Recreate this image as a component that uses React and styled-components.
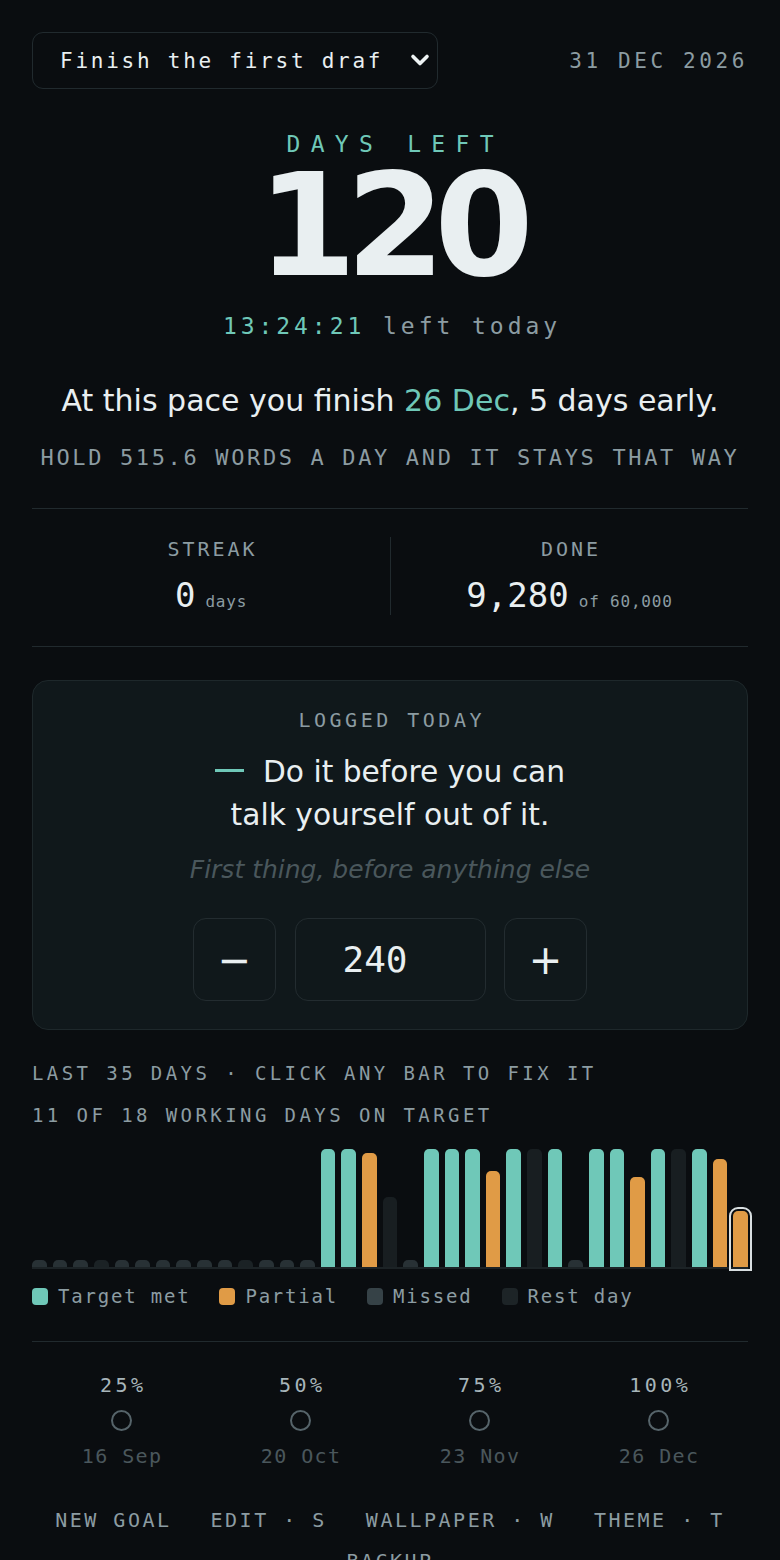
import React from "react";
import styled, { createGlobalStyle } from "styled-components";

const C = {
  bg: "#0a0d10",
  text: "#e9eff1",
  gray: "#8c9ca2",
  teal: "#6fc8b8",
  orange: "#e09b46",
  dim: "#4a575c",
  line: "#212a2e",
  card: "#10181b",
  missed: "#283135",
  rest: "#181e21",
};

const Global = createGlobalStyle`
  html, body { margin: 0; padding: 0; background: ${C.bg}; }
  body { font-family: "DejaVu Sans Mono", monospace; color: ${C.text}; overflow: hidden; }
  * { box-sizing: border-box; }
`;

const Page = styled.main`
  width: 780px;
  padding: 32px 32px 0;
  display: flex;
  flex-direction: column;
  & > * { flex-shrink: 0; }
`;

const Header = styled.header`
  display: flex;
  align-items: center;
  justify-content: space-between;
  height: 57px;
`;

const SelectWrap = styled.div`
  position: relative;
  width: 406px;
  height: 57px;
`;

const Select = styled.select`
  appearance: none;
  width: 100%;
  height: 100%;
  background: transparent;
  border: 1.5px solid ${C.line};
  border-radius: 11px;
  color: ${C.text};
  font-family: "DejaVu Sans Mono", monospace;
  font-size: 21px;
  letter-spacing: 2.75px;
  padding: 0 57px 0 27px;
  outline: none;
`;

const Chevron = styled.svg`
  position: absolute;
  right: 8px;
  top: 21px;
  width: 20px;
  height: 14px;
  pointer-events: none;
`;

const DateText = styled.div`
  font-size: 21px;
  letter-spacing: 3.6px;
  color: ${C.gray};
`;

const Hero = styled.section`
  display: flex;
  flex-direction: column;
  align-items: center;
  margin-top: 44px;
`;

const Eyebrow = styled.div`
  font-size: 23px;
  line-height: 23px;
  letter-spacing: 10.3px;
  margin-right: -10.3px;
  color: ${C.teal};
`;

const BigNum = styled.div`
  font-family: "DejaVu Sans", sans-serif;
  font-weight: 700;
  font-size: 143px;
  line-height: 140px;
  letter-spacing: -11px;
  margin-right: 0;
  color: ${C.text};
`;

const Clock = styled.div`
  margin-top: 16px;
  font-size: 23px;
  line-height: 28px;
  letter-spacing: 3.95px;
  margin-right: -3.95px;
  color: ${C.gray};
  span { color: ${C.teal}; }
`;

const Pace = styled.p`
  margin: 43px 0 0;
  font-family: "DejaVu Sans", sans-serif;
  font-size: 30px;
  line-height: 36px;
  text-align: center;
  color: ${C.text};
  span { color: ${C.teal}; }
`;

const Hold = styled.div`
  margin-top: 25px;
  text-align: center;
  font-size: 22px;
  line-height: 28px;
  letter-spacing: 2.64px;
  color: ${C.gray};
  white-space: nowrap;
`;

const Rule = styled.hr`
  border: none;
  height: 1px;
  background: ${C.line};
  margin: ${(p) => p.$m || "0"};
  width: 100%;
`;

const Stats = styled.section`
  display: grid;
  grid-template-columns: 1fr 1fr;
  padding: 28px 0 31px;
`;

const Stat = styled.div`
  display: flex;
  flex-direction: column;
  align-items: center;
  gap: 14px;
  border-left: ${(p) => (p.$divider ? `1.5px solid ${C.line}` : "none")};
`;

const StatLabel = styled.div`
  font-size: 20px;
  line-height: 24px;
  letter-spacing: 3px;
  margin-right: -3px;
  color: ${C.gray};
`;

const StatValue = styled.div`
  font-size: 34px;
  line-height: 40px;
  color: ${C.text};
  small {
    font-size: 16px;
    line-height: 1;
    letter-spacing: 0.8px;
    color: ${C.gray};
    margin-left: 10px;
  }
`;

const Card = styled.section`
  margin-top: 33px;
  background: ${C.card};
  border: 1.5px solid #1e282b;
  border-radius: 16px;
  padding: 27px 24px 28px;
  display: flex;
  flex-direction: column;
  align-items: center;
`;

const CardLabel = styled(StatLabel)`
  letter-spacing: 3.5px;
  margin-right: -3.5px;
`;

const Quote = styled.p`
  margin: 19px 0 0;
  max-width: 400px;
  text-align: center;
  font-family: "DejaVu Sans", sans-serif;
  font-size: 29.7px;
  line-height: 42.6px;
  color: ${C.text};
`;

const Dash = styled.span`
  display: inline-block;
  width: 29px;
  height: 3px;
  background: ${C.teal};
  margin-right: 19px;
  vertical-align: 10.5px;
`;

const Hint = styled.div`
  margin-top: 19px;
  font-family: "DejaVu Sans", sans-serif;
  font-style: italic;
  font-size: 25px;
  line-height: 30px;
  color: ${C.dim};
`;

const Stepper = styled.div`
  margin-top: 33px;
  display: flex;
  gap: 18.5px;
`;

const StepBtn = styled.button`
  width: 83px;
  height: 83px;
  border-radius: 13px;
  border: 1.5px solid #232c30;
  background: ${C.card};
  color: ${C.text};
  font-family: "DejaVu Sans", sans-serif;
  font-size: 40px;
  line-height: 1;
  display: flex;
  align-items: center;
  justify-content: center;
  padding: 0;
`;

const StepInput = styled.input`
  width: 191px;
  height: 83px;
  border-radius: 13px;
  border: 1.5px solid #232c30;
  background: ${C.card};
  color: ${C.text};
  font-family: "DejaVu Sans Mono", monospace;
  font-size: 36px;
  text-align: center;
  padding: 0 30px 0 0;
  outline: none;
`;

const ChartHead = styled.div`
  margin-top: ${(p) => p.$mt || "0"};
  font-size: 19px;
  line-height: 22px;
  letter-spacing: 3.42px;
  color: ${C.gray};
  white-space: nowrap;
`;

const Chart = styled.div`
  margin-top: 23px;
  height: 120px;
  display: flex;
  align-items: flex-end;
  gap: 6px;
  border-bottom: 2px solid #1c2326;
`;

const barColor = {
  met: C.teal,
  partial: C.orange,
  missed: C.missed,
  rest: C.rest,
  restSmall: "#1b2225",
};

const Bar = styled.div`
  flex: 1;
  background: ${(p) => barColor[p.$type]};
  border-radius: 5px 5px 0 0;
  ${(p) => p.$selected && `outline: 2px solid #d9dfe1; outline-offset: 2px;`}
`;

const Legend = styled.div`
  margin-top: 16px;
  display: flex;
  gap: 29px;
`;

const LegendItem = styled.div`
  display: flex;
  align-items: center;
  gap: 10px;
  font-size: 19px;
  line-height: 22px;
  letter-spacing: 1.8px;
  color: ${C.gray};
`;

const Swatch = styled.span`
  width: 16px;
  height: 17px;
  border-radius: 4px;
  background: ${(p) => p.$c};
`;

const Milestones = styled.section`
  display: grid;
  grid-template-columns: repeat(4, 1fr);
  padding-top: 31px;
`;

const Milestone = styled.div`
  display: flex;
  flex-direction: column;
  align-items: center;
`;

const MsPct = styled.div`
  font-size: 20px;
  line-height: 24px;
  letter-spacing: 3.5px;
  margin-right: -3.5px;
  color: #a7b5ba;
`;

const Ring = styled.span`
  margin-top: 13px;
  width: 21px;
  height: 21px;
  border-radius: 50%;
  border: 2px solid #56646a;
`;

const MsDate = styled.div`
  margin-top: 13px;
  font-size: 20px;
  line-height: 24px;
  letter-spacing: 1.4px;
  margin-right: -1.4px;
  color: ${C.dim};
`;

const Nav = styled.nav`
  margin-top: 40px;
  display: flex;
  flex-wrap: wrap;
  justify-content: center;
  column-gap: 39px;
  row-gap: 17px;
`;

const NavLink = styled.a`
  font-size: 20px;
  line-height: 24px;
  letter-spacing: 2.5px;
  color: ${C.gray};
  text-decoration: none;
  white-space: nowrap;
`;

const bars = [
  ["missed", 7], ["missed", 7], ["missed", 7], ["restSmall", 7], ["missed", 7],
  ["missed", 7], ["missed", 7], ["missed", 7], ["missed", 7], ["missed", 7],
  ["restSmall", 7], ["missed", 7], ["missed", 7], ["missed", 7],
  ["met", 118], ["met", 118], ["partial", 114], ["rest", 70], ["missed", 7],
  ["met", 118], ["met", 118], ["met", 118], ["partial", 96], ["met", 118],
  ["rest", 118], ["met", 118], ["missed", 7], ["met", 118], ["met", 118],
  ["partial", 90], ["met", 118], ["rest", 118], ["met", 118], ["partial", 108],
  ["partial", 56],
];

export default function App() {
  return (
    <>
      <Global />
      <Page>
        <Header>
          <SelectWrap>
            <Select defaultValue="a">
              <option value="a">Finish the first draft</option>
            </Select>
            <Chevron viewBox="0 0 20 14" fill="none">
              <path d="M3 3.5 L10 10.5 L17 3.5" stroke="#eef3f4" strokeWidth="3.6" strokeLinecap="round" strokeLinejoin="round" />
            </Chevron>
          </SelectWrap>
          <DateText>31 DEC 2026</DateText>
        </Header>

        <Hero>
          <Eyebrow>DAYS LEFT</Eyebrow>
          <BigNum>120</BigNum>
          <Clock>
            <span>13:24:21</span> left today
          </Clock>
        </Hero>

        <Pace>
          At this pace you finish <span>26 Dec</span>, 5 days early.
        </Pace>
        <Hold>HOLD 515.6 WORDS A DAY AND IT STAYS THAT WAY</Hold>

        <Rule $m="36px 0 0" />
        <Stats>
          <Stat>
            <StatLabel>STREAK</StatLabel>
            <StatValue>
              0<small>days</small>
            </StatValue>
          </Stat>
          <Stat $divider>
            <StatLabel>DONE</StatLabel>
            <StatValue>
              9,280<small>of 60,000</small>
            </StatValue>
          </Stat>
        </Stats>
        <Rule />

        <Card>
          <CardLabel>LOGGED TODAY</CardLabel>
          <Quote>
            <Dash />
            Do it before you can talk yourself out of it.
          </Quote>
          <Hint>First thing, before anything else</Hint>
          <Stepper>
            <StepBtn aria-label="decrease">−</StepBtn>
            <StepInput defaultValue="240" />
            <StepBtn aria-label="increase">+</StepBtn>
          </Stepper>
        </Card>

        <ChartHead $mt="32px">LAST 35 DAYS · CLICK ANY BAR TO FIX IT</ChartHead>
        <ChartHead $mt="20px">11 OF 18 WORKING DAYS ON TARGET</ChartHead>
        <Chart>
          {bars.map(([t, h], i) => (
            <Bar key={i} $type={t} $selected={i === bars.length - 1} style={{ height: `${h}px` }} />
          ))}
        </Chart>
        <Legend>
          <LegendItem><Swatch $c={C.teal} />Target met</LegendItem>
          <LegendItem><Swatch $c={C.orange} />Partial</LegendItem>
          <LegendItem><Swatch $c="#364247" />Missed</LegendItem>
          <LegendItem><Swatch $c="#1d2427" />Rest day</LegendItem>
        </Legend>

        <Rule $m="34px 0 0" />
        <Milestones>
          {[
            ["25%", "16 Sep"],
            ["50%", "20 Oct"],
            ["75%", "23 Nov"],
            ["100%", "26 Dec"],
          ].map(([p, d]) => (
            <Milestone key={p}>
              <MsPct>{p}</MsPct>
              <Ring />
              <MsDate>{d}</MsDate>
            </Milestone>
          ))}
        </Milestones>

        <Nav>
          <NavLink href="#">NEW GOAL</NavLink>
          <NavLink href="#">EDIT · S</NavLink>
          <NavLink href="#">WALLPAPER · W</NavLink>
          <NavLink href="#">THEME · T</NavLink>
          <NavLink href="#">BACKUP</NavLink>
        </Nav>
      </Page>
    </>
  );
}
